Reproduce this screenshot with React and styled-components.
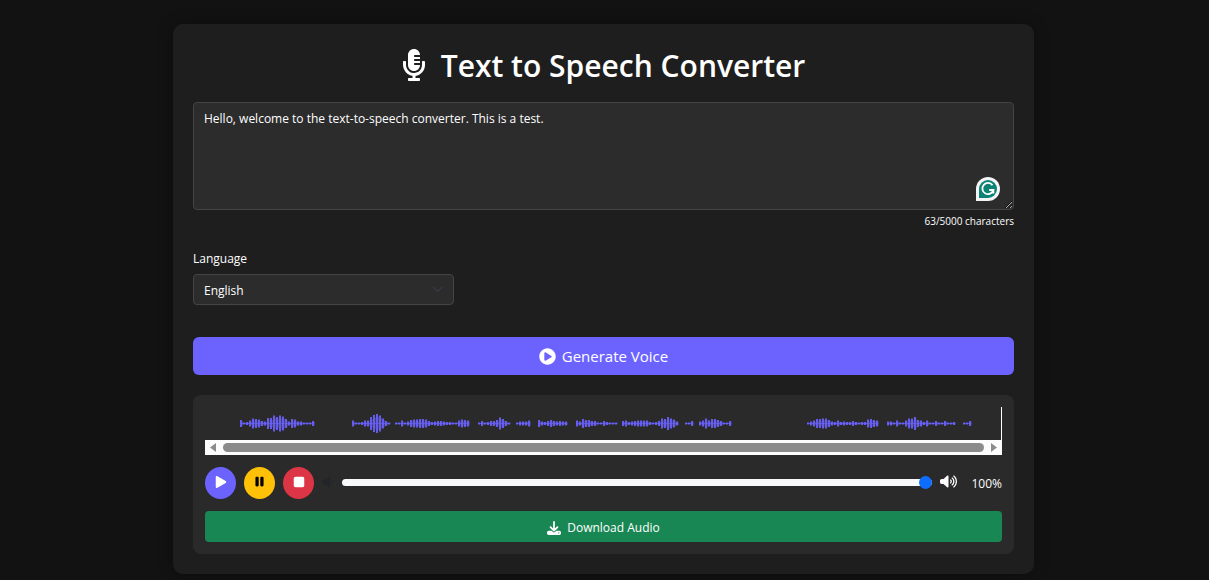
import React, { useState } from "react";
import styled, { createGlobalStyle } from "styled-components";
import { FaMicrophoneAlt, FaPlayCircle, FaPlay } from "react-icons/fa";
import {
  FaDownload,
  FaPause,
  FaStop,
  FaVolumeLow,
  FaVolumeHigh,
} from "react-icons/fa6";

const GlobalStyle = createGlobalStyle`
  * { box-sizing: border-box; }
  body {
    margin: 0;
    background: #121212;
    color: #fff;
    font-family: "Segoe UI", "Open Sans", "Noto Sans", sans-serif;
    font-size: 12px;
    line-height: 22px;
  }
  button, textarea, select, input { font: inherit; }
`;

const Page = styled.div`
  padding: 24px 2px 6px 0;
`;

const Card = styled.main`
  max-width: 861px;
  margin: 0 auto;
  padding: 20px;
  background: #1e1e1e;
  border-radius: 10px;
  box-shadow: 0 0 16px rgba(0, 0, 0, 0.3);
`;

const Title = styled.h1`
  display: flex;
  align-items: center;
  justify-content: center;
  gap: 15px;
  margin: 0 0 14px;
  font-size: 30px;
  line-height: 44px;
  font-weight: 600;
  svg {
    width: 24px;
    height: 32px;
    margin-bottom: 2px;
  }
`;

const TextBox = styled.div`
  position: relative;
`;

const TextArea = styled.textarea`
  display: block;
  width: 100%;
  height: 108px;
  padding: 5px 10px;
  border: 1px solid #444;
  border-radius: 4px;
  background: #2c2c2c;
  color: #fff;
  resize: vertical;
  outline: none;
`;

const AssistantBadge = styled.svg`
  position: absolute;
  right: 13px;
  bottom: 8px;
  width: 26px;
  height: 26px;
`;

const Counter = styled.p`
  margin: 4px 0 0;
  font-size: 10px;
  line-height: 15px;
  text-align: right;
`;

const Field = styled.div`
  width: 261px;
  max-width: 100%;
  margin: 19px 0 32px;
`;

const Label = styled.label`
  display: block;
  margin-bottom: 4px;
`;

const SelectBox = styled.div`
  position: relative;
`;

const Select = styled.select`
  display: block;
  appearance: none;
  width: 100%;
  height: 31px;
  padding: 2px 10px 0;
  border: 1px solid #444;
  border-radius: 4px;
  background: #2c2c2c;
  color: #fff;
`;

const Chevron = styled.svg`
  position: absolute;
  right: 11px;
  top: 10px;
  width: 11px;
  height: 11px;
  pointer-events: none;
`;

const WideButton = styled.button`
  display: flex;
  align-items: center;
  justify-content: center;
  gap: 6px;
  width: 100%;
  height: ${(p) => (p.$large ? 38 : 31)}px;
  padding: ${(p) => (p.$large ? 0 : 2)}px 0 0;
  border: 0;
  border-radius: ${(p) => (p.$large ? 6 : 4)}px;
  background: ${(p) => p.$color};
  color: #fff;
  font-size: ${(p) => (p.$large ? 15 : 12)}px;
`;

const Player = styled.section`
  display: flex;
  flex-direction: column;
  gap: 12px;
  margin-top: 20px;
  padding: 12px;
  border-radius: 8px;
  background: #2a2a2a;
`;

const WaveScroller = styled.div`
  display: flex;
  flex-direction: column;
`;

const WaveArea = styled.svg`
  display: block;
  width: 100%;
  height: 33px;
  border-right: 1px solid #fff;
`;

const ScrollTrack = styled.div`
  display: flex;
  align-items: center;
  gap: 7px;
  height: 15px;
  padding: 0 5px;
  background: #fcfcfc;
`;

const ScrollArrow = styled.svg`
  flex: none;
  width: 6px;
  height: 9px;
  fill: #8b8b8b;
`;

const ScrollThumb = styled.div`
  flex: 1;
  height: 9px;
  border-radius: 5px;
  background: #8b8b8b;
`;

const Controls = styled.div`
  display: flex;
  align-items: center;
  gap: 8px;
`;

const RoundButton = styled.button`
  display: flex;
  flex: none;
  align-items: center;
  justify-content: center;
  width: 31px;
  height: 32px;
  padding: 0 0 3px;
  border: 0;
  border-radius: 50%;
  background: ${(p) => p.$color};
  color: ${(p) => p.$ink || "#fff"};
`;

const VolumeIcon = styled.span`
  display: flex;
  flex: none;
  padding-bottom: 3px;
  color: ${(p) => p.$ink};
`;

const Slider = styled.input`
  flex: 1;
  min-width: 0;
  height: 14px;
  margin: 0 0 2px;
  appearance: none;
  background: transparent;
  &::-webkit-slider-runnable-track {
    height: 7px;
    border-radius: 7px;
    background: #f8f9fa;
  }
  &::-webkit-slider-thumb {
    appearance: none;
    width: 13px;
    height: 13px;
    margin-top: -3px;
    border-radius: 50%;
    background: #0d6efd;
  }
`;

const Percent = styled.output`
  flex: none;
  padding: 2px 0 0 6px;
`;

/* Each run of speech: start x, then bar heights at a 3px pitch. */
const RUNS = [
  [35, [7, 2, 3, 6, 10, 9, 8, 5, 4, 11, 11, 16, 13, 16, 14, 9, 4, 9, 8, 4, 4, 2, 2, 2, 5]],
  [147, [6, 2, 2, 3, 6, 6, 13, 17, 19, 16, 10, 5, 2]],
  [190, [2, 2, 6, 2, 4, 7, 8, 8, 9, 9, 8, 5, 3, 4, 5, 5, 4, 3, 3, 2, 2, 6, 8, 7, 6]],
  [273, [2, 5, 2, 3, 5, 5, 7, 12, 9, 5, 2]],
  [311, [2, 4, 4, 4, 6]],
  [333, [7, 4, 3, 5, 7, 5, 4, 5, 4, 4]],
  [371, [6, 4, 9, 7, 7, 5, 5, 2, 2, 5, 3, 2, 2, 2]],
  [417, [5, 6, 3, 4, 5, 6, 6, 6, 6, 3, 2, 3, 5, 10, 9, 13, 10, 8, 4]],
  [480, [2, 2, 5]],
  [494, [4, 6, 10, 6, 9, 9, 7, 5, 2, 2, 5]],
  [602, [2, 4, 6, 9, 9, 10, 10, 7, 4, 3, 6, 3, 4, 3, 3, 5, 3, 2, 3, 3, 8, 9, 7, 6]],
  [682, [4, 4, 2, 6, 2, 2, 6, 10, 10, 13, 7, 6, 3, 6, 2, 2, 5, 2, 2, 5, 2, 2, 3]],
  [758, [2, 2, 5]],
];

function Waveform() {
  return (
    <WaveArea viewBox="0 0 796 33" preserveAspectRatio="none" role="img" aria-label="Waveform">
      {RUNS.map(([start, bars]) => (
        <g key={start} fill="#6c63ff">
          <rect x={start} y="16" width={bars.length * 3 - 1} height="1" opacity="0.6" />
          {bars.map((h, i) => (
            <g key={i}>
              <rect x={start + i * 3} y={16.5 - h / 2} width="2" height={h} opacity="0.9" />
              <rect x={start + i * 3 + 2} y={16.5 - h / 3} width="1" height={h / 1.5} opacity="0.35" />
            </g>
          ))}
        </g>
      ))}
    </WaveArea>
  );
}

export default function App() {
  const [text, setText] = useState(
    "Hello, welcome to the text-to-speech converter. This is a test."
  );
  const [volume, setVolume] = useState(100);

  return (
    <Page>
      <GlobalStyle />
      <Card>
        <Title>
          <FaMicrophoneAlt />
          Text to Speech Converter
        </Title>
        <TextBox>
          <TextArea
            aria-label="Text to convert"
            maxLength={5000}
            spellCheck={false}
            value={text}
            onChange={(e) => setText(e.target.value)}
          />
          <AssistantBadge viewBox="0 0 26 26" aria-hidden="true">
            <path d="M1 25V13a12 12 0 1 1 12 12z" fill="#f4f4f6" />
            <path d="M4 22v-9a9 9 0 1 1 9 9z" fill="#0b8274" />
            <path
              d="M17.500 9.200A5.600 5.600 0 1 0 18.400 14H14.200M18.400 14v3.400"
              fill="none"
              stroke="#fff"
              strokeWidth="1.8"
            />
          </AssistantBadge>
        </TextBox>
        <Counter>{text.length}/5000 characters</Counter>
        <Field>
          <Label htmlFor="language">Language</Label>
          <SelectBox>
            <Select id="language" defaultValue="English">
              <option>English</option>
            </Select>
            <Chevron viewBox="0 0 16 16" aria-hidden="true">
              <path d="m2 5 6 6 6-6" fill="none" stroke="#343a40" strokeWidth="2" strokeLinecap="round" strokeLinejoin="round" />
            </Chevron>
          </SelectBox>
        </Field>
        <WideButton $large $color="#6c63ff">
          <FaPlayCircle size={17} />
          Generate Voice
        </WideButton>
        <Player>
          <WaveScroller>
            <Waveform />
            <ScrollTrack>
              <ScrollArrow viewBox="0 0 6 9"><path d="M6 0v9L0 4.500z" /></ScrollArrow>
              <ScrollThumb />
              <ScrollArrow viewBox="0 0 6 9"><path d="M0 0v9l6-4.500z" /></ScrollArrow>
            </ScrollTrack>
          </WaveScroller>
          <Controls>
            <RoundButton $color="#6c63ff" aria-label="Play"><FaPlay size={12} /></RoundButton>
            <RoundButton $color="#ffc107" $ink="#000" aria-label="Pause"><FaPause size={13} /></RoundButton>
            <RoundButton $color="#dc3545" aria-label="Stop"><FaStop size={14} /></RoundButton>
            <VolumeIcon $ink="#212529"><FaVolumeLow size={12} /></VolumeIcon>
            <Slider
              type="range"
              aria-label="Volume"
              min="0"
              max="100"
              value={volume}
              onChange={(e) => setVolume(Number(e.target.value))}
            />
            <VolumeIcon $ink="#fff"><FaVolumeHigh size={17} /></VolumeIcon>
            <Percent>{volume}%</Percent>
          </Controls>
          <WideButton $color="#198754">
            <FaDownload size={14} />
            Download Audio
          </WideButton>
        </Player>
      </Card>
    </Page>
  );
}
